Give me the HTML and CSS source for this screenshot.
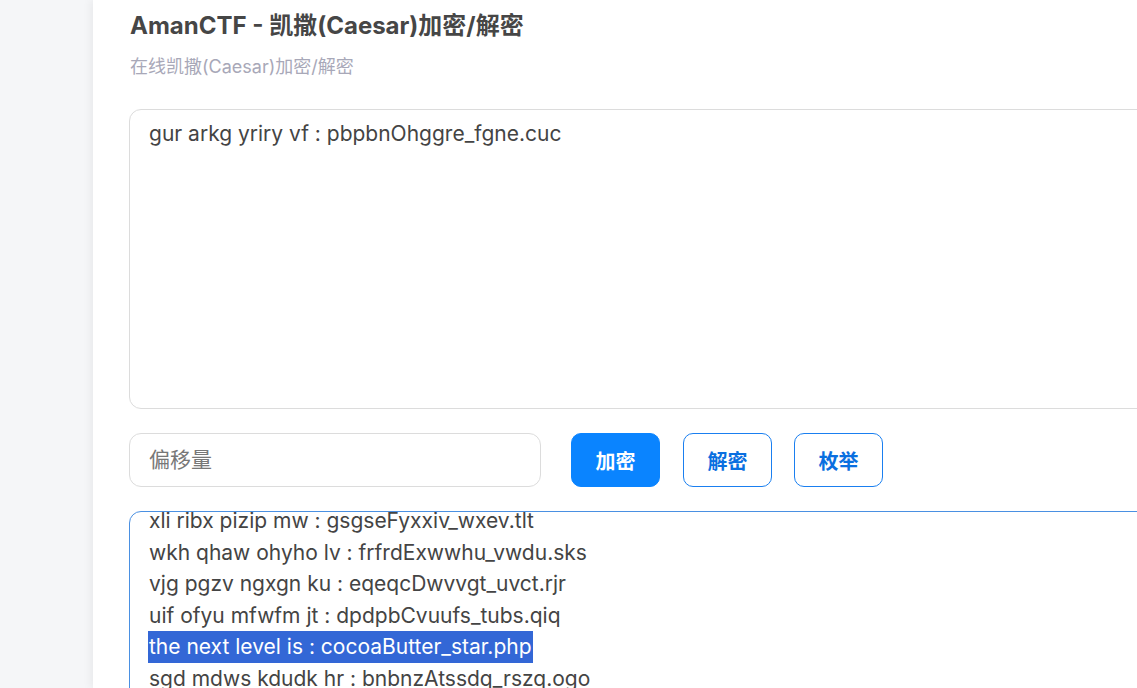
FILE: index.html
```html
<!DOCTYPE html>
<html lang="zh-CN">
<head>
<meta charset="utf-8">
<title>AmanCTF - 凯撒(Caesar)加密/解密</title>
<link rel="stylesheet" href="styles.css">
</head>
<body>
<div class="layout">
  <aside class="sidebar"></aside>
  <main class="main">
    <h1 class="title">AmanCTF - 凯撒(Caesar)加密/解密</h1>
    <p class="subtitle">在线凯撒(Caesar)加密/解密</p>
    <div class="box input-box">gur arkg yriry vf : pbpbnOhggre_fgne.cuc</div>
    <div class="controls">
      <div class="shift">偏移量</div>
      <button class="btn btn-primary">加密</button>
      <button class="btn btn-outline">解密</button>
      <button class="btn btn-outline">枚举</button>
    </div>
    <div class="box output-box">
      <div class="output-lines">
        <div class="line">xli ribx pizip mw : gsgseFyxxiv_wxev.tlt</div>
        <div class="line">wkh qhaw ohyho lv : frfrdExwwhu_vwdu.sks</div>
        <div class="line">vjg pgzv ngxgn ku : eqeqcDwvvgt_uvct.rjr</div>
        <div class="line">uif ofyu mfwfm jt : dpdpbCvuufs_tubs.qiq</div>
        <div class="line"><span class="sel">the next level is : cocoaButter_star.php</span></div>
        <div class="line">sgd mdws kdudk hr : bnbnzAtssdq_rszq.ogo</div>
      </div>
    </div>
  </main>
</div>
</body>
</html>
```
FILE: styles.css
```css
html, body {
  margin: 0;
  padding: 0;
  height: 100%;
  overflow: hidden;
  background: #fff;
  font-family: "Inter", "Noto Sans CJK SC", sans-serif;
  color: #444;
}
.layout {
  display: flex;
  height: 688px;
}
.sidebar {
  width: 93px;
  flex: none;
  background: #f5f6f8;
}
.main {
  flex: none;
  width: 1100px;
  padding: 10px 0 0 37px;
  background: #fff;
  box-shadow: -3px 0 8px rgba(0, 0, 0, 0.05);
}
.title {
  margin: 0;
  font-size: 24px;
  line-height: 32px;
  font-weight: 700;
  color: #464646;
}
.subtitle {
  margin: 13px 0 0;
  font-size: 18px;
  line-height: 24px;
  color: #a8a8b8;
}
.box {
  box-sizing: border-box;
  width: 1100px;
  border: 1px solid #dcdcdc;
  border-radius: 12px;
  font-size: 21px;
  line-height: 31.5px;
  color: #444;
  padding: 8px 19px;
  margin-left: -1px;
}
.input-box {
  margin-top: 30px;
  height: 300px;
}
.controls {
  display: flex;
  align-items: center;
  margin-top: 24px;
  margin-left: -1px;
}
.shift {
  box-sizing: border-box;
  width: 412px;
  height: 54px;
  border: 1px solid #dcdcdc;
  border-radius: 12px;
  padding: 0 19px;
  font-size: 21px;
  line-height: 52px;
  color: #777;
}
.btn {
  box-sizing: border-box;
  width: 89px;
  height: 54px;
  border-radius: 10px;
  font-family: "Inter", "Noto Sans CJK SC", sans-serif;
  font-size: 20px;
  font-weight: 700;
  padding: 0;
  cursor: pointer;
}
.btn-primary {
  margin-left: 30px;
  background: #0a84ff;
  border: 1px solid #0a84ff;
  color: #fff;
}
.btn-outline {
  margin-left: 23px;
  background: #fff;
  border: 1px solid #1a7ff0;
  color: #0a6fe0;
}
.btn-outline + .btn-outline {
  margin-left: 22px;
}
.output-box {
  margin-top: 24px;
  height: 300px;
  border-color: #4a90e2;
  overflow: hidden;
  padding-top: 0;
}
.output-lines {
  margin-top: -7px;
}
.line {
  white-space: nowrap;
}
.sel {
  display: inline-block;
  vertical-align: top;
  padding-right: 1px;
  margin-left: -1px;
  padding-left: 1px;
  background: #3367d6;
  color: #fff;
}
```
